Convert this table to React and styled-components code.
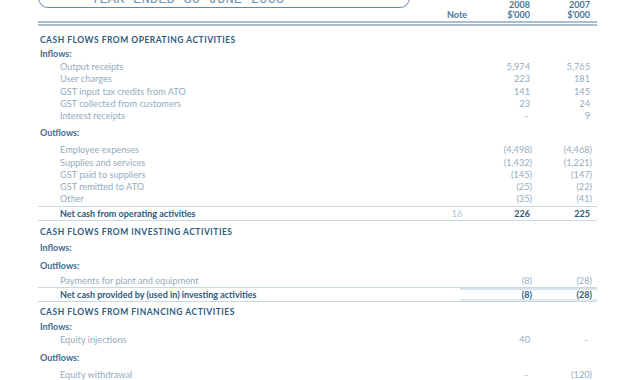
import React from 'react';
import styled, { createGlobalStyle, css } from 'styled-components';

const Global = createGlobalStyle`
  html, body { margin: 0; padding: 0; background: #ffffff; }
  body {
    width: 630px;
    height: 380px;
    overflow: hidden;
    font-family: "Lato", "Open Sans", sans-serif;
  }
`;

const columns = css`
  display: grid;
  grid-template-columns: 1fr 40px 55px 60px;
  padding-right: 5px;
`;

const Page = styled.div`
  width: 559px;
  margin-left: 38px;
  box-sizing: border-box;
  font-family: "Lato", "Open Sans", sans-serif;
`;

const Header = styled.header`
  ${columns};
  height: 21px;
  border-bottom: 5px double #a9bfcf;
`;

const Stamp = styled.div`
  align-self: start;
  width: 372px;
  height: 38px;
  margin-top: -30px;
  box-sizing: border-box;
  border: 1.5px solid #5d89ae;
  border-radius: 10px;
  display: flex;
  align-items: flex-end;
  padding: 0 0 1px 52px;
  font-family: "Liberation Mono", monospace;
  font-size: 14px;
  line-height: 14px;
  color: #7195b4;
  white-space: nowrap;
`;

const HeadCell = styled.div`
  align-self: end;
  padding-bottom: 1px;
  font-size: 9px;
  line-height: 10px;
  font-weight: 700;
  color: #4b7596;
  text-align: ${p => (p.$center ? 'center' : 'right')};
  padding-right: ${p => (p.$center ? '0' : '2px')};
`;

const SectionTitle = styled.h2`
  margin: ${p => p.$mt}px 0 0;
  height: 14px;
  line-height: 14px;
  padding-left: 2px;
  font-size: 8.5px;
  font-weight: 700;
  letter-spacing: 0.5px;
  text-transform: uppercase;
  color: #2f5d80;
`;

const GroupLabel = styled.div`
  margin-top: ${p => p.$mt}px;
  height: 14px;
  line-height: 14px;
  padding-left: 2px;
  font-size: 9px;
  font-weight: 700;
  color: #3f6b8d;
`;

const Items = styled.div`
  margin-top: ${p => p.$mt}px;
`;

const ItemRow = styled.div`
  ${columns};
  height: 12.25px;
  line-height: 12.25px;
  font-size: 9.2px;
  font-weight: 400;
  color: #94acbe;
`;

const heavyRules = css`
  background-image:
    linear-gradient(#d6e3ec, #d6e3ec),
    linear-gradient(#dfe9f0, #dfe9f0);
  background-repeat: no-repeat;
  background-size: 137px 2px, 137px 2px;
  background-position: right top, right bottom;
`;

const TotalRow = styled.div`
  ${columns};
  height: 13px;
  line-height: 13px;
  border-top: 1px solid #c9d7e1;
  border-bottom: 1px solid #c9d7e1;
  font-size: 9px;
  font-weight: 700;
  color: #2c597c;
  ${p => p.$heavy && heavyRules};
`;

const Label = styled.div`
  padding-left: 22px;
  white-space: nowrap;
`;

const Note = styled.div`
  text-align: center;
  font-weight: 400;
  color: #b0c2cf;
`;

const Amount = styled.div`
  text-align: right;
  white-space: nowrap;
  padding-right: ${p => (p.$kind === 'dash' ? '4px' : p.$kind === 'paren' ? '0' : '2px')};
`;

const kindOf = v => (v === '-' ? 'dash' : v.startsWith('(') ? 'paren' : 'num');

const sections = [
  {
    title: 'Cash flows from operating activities',
    mt: 7,
    groups: [
      {
        label: 'Inflows:',
        mt: 0,
        itemsMt: 0,
        items: [
          ['Output receipts', '5,974', '5,765'],
          ['User charges', '223', '181'],
          ['GST input tax credits from ATO', '141', '145'],
          ['GST collected from customers', '23', '24'],
          ['Interest receipts', '-', '9'],
        ],
      },
      {
        label: 'Outflows:',
        mt: 4,
        itemsMt: 4,
        items: [
          ['Employee expenses', '(4,498)', '(4,468)'],
          ['Supplies and services', '(1,432)', '(1,221)'],
          ['GST paid to suppliers', '(145)', '(147)'],
          ['GST remitted to ATO', '(25)', '(22)'],
          ['Other', '(35)', '(41)'],
        ],
      },
    ],
    total: { label: 'Net cash from operating activities', note: '16', a: '226', b: '225' },
  },
  {
    title: 'Cash flows from investing activities',
    mt: 4,
    groups: [
      { label: 'Inflows:', mt: 2, itemsMt: 0, items: [] },
      {
        label: 'Outflows:',
        mt: 4,
        itemsMt: 2,
        items: [['Payments for plant and equipment', '(8)', '(28)']],
      },
    ],
    total: {
      label: 'Net cash provided by (used in) investing activities',
      note: '',
      a: '(8)',
      b: '(28)',
      heavy: true,
    },
  },
  {
    title: 'Cash flows from financing activities',
    mt: 3,
    groups: [
      { label: 'Inflows:', mt: 1, itemsMt: 0, items: [['Equity injections', '40', '-']] },
      { label: 'Outflows:', mt: 5, itemsMt: 4, items: [['Equity withdrawal', '-', '(120)']] },
    ],
  },
];

export default function App() {
  return (
    <>
      <Global />
      <Page>
        <Header>
          <Stamp>YEAR ENDED 30 JUNE 2008</Stamp>
          <HeadCell $center>Note</HeadCell>
          <HeadCell>
            2008
            <br />
            $&rsquo;000
          </HeadCell>
          <HeadCell>
            2007
            <br />
            $&rsquo;000
          </HeadCell>
        </Header>
        {sections.map(section => (
          <section key={section.title}>
            <SectionTitle $mt={section.mt}>{section.title}</SectionTitle>
            {section.groups.map(group => (
              <div key={group.label}>
                <GroupLabel $mt={group.mt}>{group.label}</GroupLabel>
                {group.items.length > 0 && (
                  <Items $mt={group.itemsMt}>
                    {group.items.map(([label, a, b]) => (
                      <ItemRow key={label}>
                        <Label>{label}</Label>
                        <Note />
                        <Amount $kind={kindOf(a)}>{a}</Amount>
                        <Amount $kind={kindOf(b)}>{b}</Amount>
                      </ItemRow>
                    ))}
                  </Items>
                )}
              </div>
            ))}
            {section.total && (
              <TotalRow $heavy={section.total.heavy}>
                <Label>{section.total.label}</Label>
                <Note>{section.total.note}</Note>
                <Amount $kind={kindOf(section.total.a)}>{section.total.a}</Amount>
                <Amount $kind={kindOf(section.total.b)}>{section.total.b}</Amount>
              </TotalRow>
            )}
          </section>
        ))}
      </Page>
    </>
  );
}
